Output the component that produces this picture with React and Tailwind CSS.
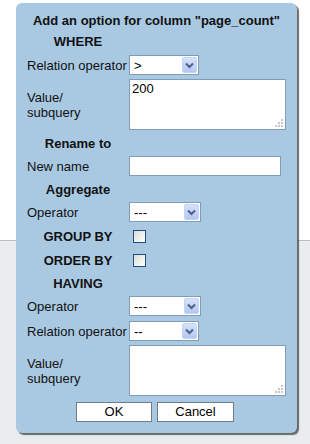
import React from "react";

function Select({ value, w }) {
  return (
    <div className={`relative h-[20px] ${w} bg-white border border-[#7f9db9] flex items-center`}>
      <span className="pl-[4px] text-[13px] leading-none text-black">{value}</span>
      <div className="absolute right-[1px] top-[1px] bottom-[1px] w-[15px] rounded-[2px] bg-gradient-to-b from-[#d6e2fb] to-[#b3c7f1] border border-[#c3d3fd] flex items-center justify-center">
        <svg width="9" height="7" viewBox="0 0 9 7">
          <path d="M1 1.5 L4.5 5 L8 1.5" stroke="#4d6185" strokeWidth="2" fill="none" />
        </svg>
      </div>
    </div>
  );
}

function TextArea({ value }) {
  return (
    <div className="relative h-[51px] w-[157px] bg-white border border-[#7f9db9]">
      <span className="absolute left-[2px] top-[1px] text-[13px] leading-[15px] text-black">{value}</span>
      <svg className="absolute right-[2px] bottom-[2px]" width="8" height="8" viewBox="0 0 8 8">
        <rect x="6" y="0" width="2" height="2" fill="#c8c8c8" />
        <rect x="3" y="3" width="2" height="2" fill="#c8c8c8" />
        <rect x="6" y="3" width="2" height="2" fill="#c8c8c8" />
        <rect x="0" y="6" width="2" height="2" fill="#c8c8c8" />
        <rect x="3" y="6" width="2" height="2" fill="#c8c8c8" />
        <rect x="6" y="6" width="2" height="2" fill="#c8c8c8" />
      </svg>
    </div>
  );
}

function Checkbox() {
  return <div className="ml-[4px] w-[13px] h-[13px] border border-[#1c5180] bg-gradient-to-br from-[#dcdcd7] to-white" />;
}

function Heading({ children, className = "" }) {
  return (
    <div className={`w-[102px] text-center font-bold text-[13px] leading-[20px] text-[#111] ${className}`}>{children}</div>
  );
}

function Row({ label, children, className = "", h = "h-[20px]" }) {
  return (
    <div className={`flex items-center ${h} ${className}`}>
      <div className="w-[102px] text-[13px] leading-[15px] text-[#111]">{label}</div>
      {children}
    </div>
  );
}

export default function App() {
  return (
    <div className="relative w-[310px] h-[444px] overflow-hidden" style={{ fontFamily: '"Liberation Sans", Arial, sans-serif' }}>
      <div className="flex flex-col h-full">
        <div className="h-[240px] bg-white" />
        <div className="h-[1px] bg-[#b9bec3]" />
        <div className="flex-1 bg-[#e9edf0]" />
      </div>
      <div className="absolute left-[16px] top-[3px] w-[281px] h-[430px] rounded-[6px] bg-[#a9c9e3] shadow-[2px_2px_1px_rgba(60,60,60,0.75)] pl-[11px]">
        <div className="mt-[7px] -ml-[11px] h-[22px] text-center font-bold text-[13px] leading-[22px] text-[#111]">
          Add an option for column "page_count"
        </div>
        <Heading>WHERE</Heading>
        <Row label="Relation operator" className="mt-[3px]">
          <Select value=">" w="w-[70px]" />
        </Row>
        <Row label={<>Value/<br />subquery</>} className="mt-[4px]" h="h-[51px]">
          <TextArea value="200" />
        </Row>
        <Heading className="mt-[4px]">Rename to</Heading>
        <Row label="New name" className="mt-[2px]">
          <div className="h-[20px] w-[152px] bg-white border border-[#7f9db9]" />
        </Row>
        <Heading className="mt-[4px]">Aggregate</Heading>
        <Row label="Operator" className="mt-[2px]">
          <Select value="---" w="w-[72px]" />
        </Row>
        <Row label={<div className="w-[102px] text-center font-bold">GROUP BY</div>} className="mt-[4px]">
          <Checkbox />
        </Row>
        <Row label={<div className="w-[102px] text-center font-bold">ORDER BY</div>} className="mt-[4px]">
          <Checkbox />
        </Row>
        <Heading className="mt-[4px]">HAVING</Heading>
        <Row label="Operator" className="mt-[2px]">
          <Select value="---" w="w-[72px]" />
        </Row>
        <Row label="Relation operator" className="mt-[5px]">
          <Select value="--" w="w-[70px]" />
        </Row>
        <Row label={<>Value/<br />subquery</>} className="mt-[4px]" h="h-[51px]">
          <TextArea value="" />
        </Row>
        <div className="mt-[6px] -ml-[11px] flex justify-center gap-[5px] pr-[3px]">
          <div className="w-[76px] h-[20px] bg-white border border-[#6d7d8b] flex items-center justify-center text-[13px] text-black">OK</div>
          <div className="w-[77px] h-[20px] bg-white border border-[#6d7d8b] flex items-center justify-center text-[13px] text-black">Cancel</div>
        </div>
      </div>
    </div>
  );
}
